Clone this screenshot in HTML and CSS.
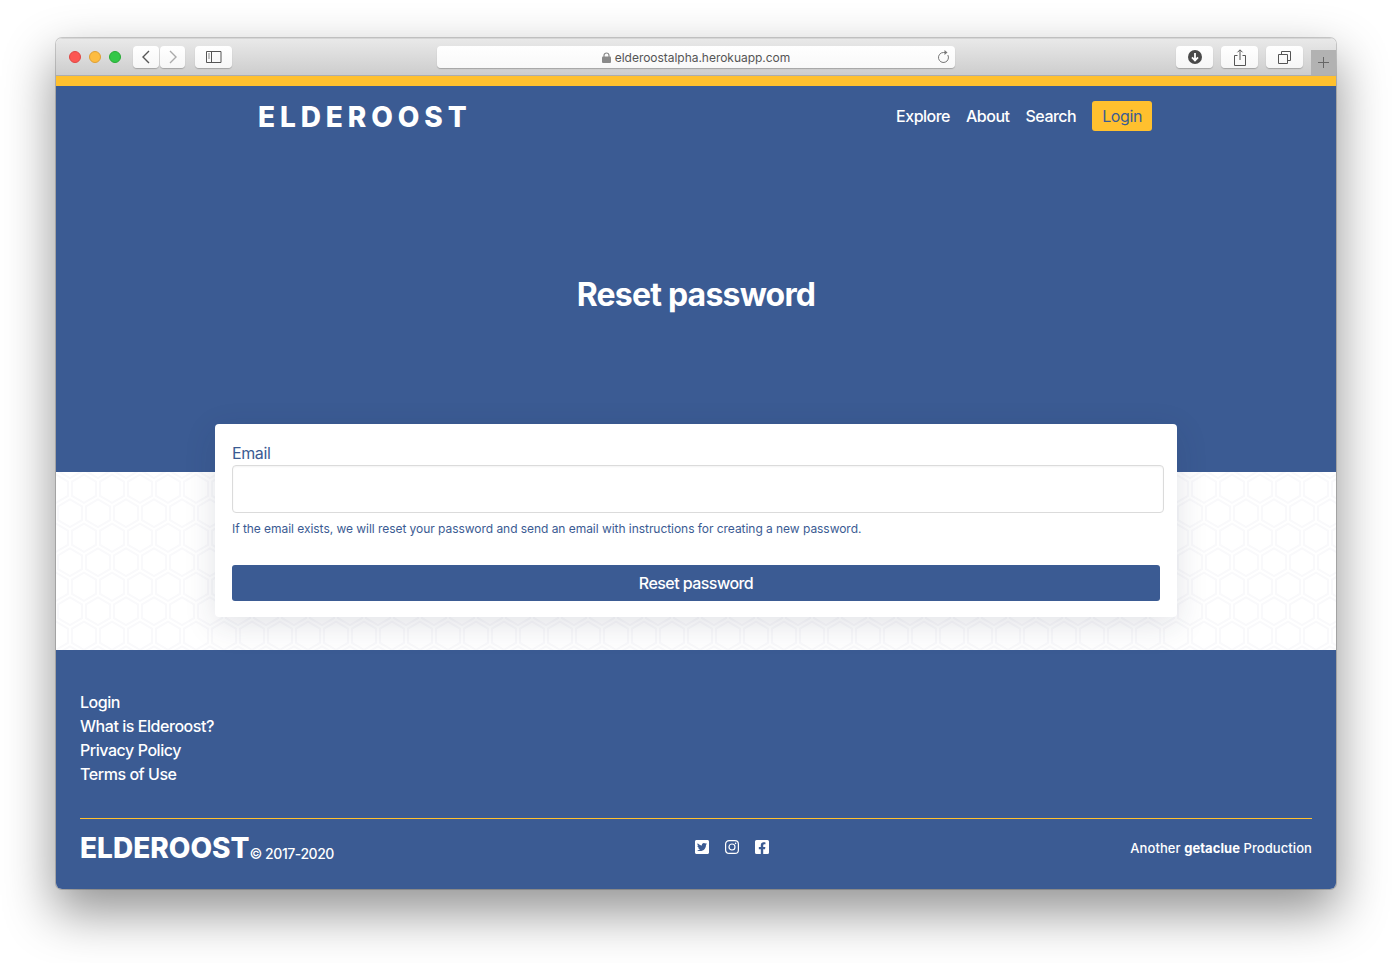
FILE: index.html
```html
<!DOCTYPE html>
<html>
    <head>
        <meta charset="utf-8">
        <title>Elderoost - Reset password</title>
        <link rel="stylesheet" href="styles.css">
    </head>

    <body>
        <div class="window">
            <div class="toolbar">
                <span class="dot dot-red"></span>
                <span class="dot dot-yellow"></span>
                <span class="dot dot-green"></span>
                <div class="tool tool-back">
                    <svg width="10" height="14" viewBox="0 0 10 14"><path d="M8 1L2 7l6 6" fill="none" stroke="#555" stroke-width="1.4"/></svg>
                </div>
                <div class="tool tool-forward">
                    <svg width="10" height="14" viewBox="0 0 10 14"><path d="M2 1l6 6-6 6" fill="none" stroke="#aaa" stroke-width="1.4"/></svg>
                </div>
                <div class="tool tool-sidebar">
                    <svg width="16" height="12" viewBox="0 0 16 12"><path d="M.5.5h14.500v11H.5zM5.500.5v11" fill="none" stroke="#555"/><path d="M2 3h2M2 5h2M2 7h2" stroke="#888"/></svg>
                </div>
                <div class="url">
                    <svg class="lock" width="9" height="11" viewBox="0 0 9 11"><path d="M2 5V3.500a2.500 2.500 0 0 1 5 0V5" fill="none" stroke="#8a8a8a" stroke-width="1.2"/><rect y="4.500" width="9" height="6.500" rx="1" fill="#8a8a8a"/></svg>
                    <span>elderoostalpha.herokuapp.com</span>
                    <svg class="reload" width="13" height="14" viewBox="0 0 13 14"><path d="M10.800 5A5 5 0 1 1 6.500 2.500H8" fill="none" stroke="#777"/><path d="M7.500 0l3 2.500-3 2.500z" fill="#777"/></svg>
                </div>
                <div class="tool tool-download">
                    <svg width="14" height="14" viewBox="0 0 14 14"><circle cx="7" cy="7" r="7" fill="#4a4a4a"/><path d="M7 3v7M4 7.300L7 10.500l3-3.200" fill="none" stroke="#fff" stroke-width="1.800"/></svg>
                </div>
                <div class="tool tool-share">
                    <svg width="12" height="17" viewBox="0 0 12 17"><path d="M3.500 6.500H.5v10h11v-10h-3M6 11V1M3.500 3.300L6 .8l2.500 2.500" fill="none" stroke="#555"/></svg>
                </div>
                <div class="tool tool-tabs">
                    <svg width="13" height="13" viewBox="0 0 13 13"><path d="M.5 3.500h9v9h-9zM3.500 3.500v-3h9v9h-3" fill="none" stroke="#555"/></svg>
                </div>
                <div class="new-tab">
                    <svg width="11" height="11" viewBox="0 0 11 11"><path d="M5.500 0v11M0 5.500h11" stroke="#666"/></svg>
                </div>
            </div>

            <div class="hero">
                <nav class="nav">
                    <a class="logo">ELDEROOST</a>
                    <div class="nav-links">
                        <a>Explore</a>
                        <a>About</a>
                        <a>Search</a>
                        <a class="nav-login">Login</a>
                    </div>
                </nav>
                <h1 class="title">Reset password</h1>
            </div>

            <div class="band">
                <form class="card">
                    <label class="field-label" for="email">Email</label>
                    <input class="field-input" type="text" id="email"/>
                    <p class="field-help">If the email exists, we will reset your password and send an email with instructions for creating a new password.</p>
                    <button class="submit" type="button">Reset password</button>
                </form>
            </div>

            <footer class="footer">
                <ul class="footer-links">
                    <li>Login</li>
                    <li>What is Elderoost?</li>
                    <li>Privacy Policy</li>
                    <li>Terms of Use</li>
                </ul>
                <div class="footer-bottom">
                    <div class="brand"><span class="brand-name">ELDEROOST</span><span class="brand-year">© 2017-2020</span></div>
                    <div class="social">
                        <svg width="14" height="16" viewBox="0 0 448 512"><path fill="#fff" d="M400 32H48C21.500 32 0 53.500 0 80v352c0 26.500 21.500 48 48 48h352c26.500 0 48-21.500 48-48V80c0-26.500-21.500-48-48-48zm-48.900 158.800c.2 2.800.2 5.700.2 8.500 0 86.700-66 186.600-186.600 186.600-37.200 0-71.700-10.800-100.700-29.400 5.300.6 10.400.8 15.800.8 30.700 0 58.900-10.400 81.400-28-28.800-.6-53-19.500-61.300-45.500 10.100 1.500 19.200 1.500 29.600-1.200-30-6.100-52.500-32.500-52.500-64.400v-.8c8.700 4.900 18.900 7.900 29.600 8.300a65.447 65.447 0 0 1-29.200-54.600c0-12.200 3.200-23.400 8.900-33.100 32.300 39.800 80.800 65.800 135.200 68.600-9.300-44.500 24-80.600 64-80.600 18.900 0 35.900 7.900 47.900 20.700 14.800-2.800 29-8.300 41.600-15.800-4.900 15.200-15.100 28-28.800 36.200 13.200-1.400 26-5.100 37.800-10.200-8.900 13.100-20.100 24.700-32.900 34z"/></svg>
                        <svg width="14" height="16" viewBox="0 0 14 16"><rect x=".6" y="1.600" width="12.800" height="12.800" rx="3.500" fill="none" stroke="#fff" stroke-width="1.200"/><circle cx="7" cy="8" r="3" fill="none" stroke="#fff" stroke-width="1.200"/><circle cx="10.600" cy="4.400" r=".8" fill="#fff"/></svg>
                        <svg width="14" height="16" viewBox="0 0 448 512"><path fill="#fff" d="M400 32H48A48 48 0 0 0 0 80v352a48 48 0 0 0 48 48h137.250V327.690h-63V256h63v-54.640c0-62.150 37-96.480 93.670-96.480 27.140 0 55.520 4.840 55.520 4.840v61h-31.270c-30.810 0-40.420 19.120-40.420 38.730V256h68.780l-11 71.690h-57.780V480H400a48 48 0 0 0 48-48V80a48 48 0 0 0-48-48z"/></svg>
                    </div>
                    <div class="credit">Another <b>getaclue</b> Production</div>
                </div>
            </footer>
        </div>
    </body>
</html>
```

FILE: styles.css
```css
html, body {
    height: 963px;
    overflow: hidden;
}

body {
    margin: 0;
    padding: 38px 56px 0;
    box-sizing: border-box;
    background: #fff;
    font-family: Inter, "Liberation Sans", sans-serif;
    color: #3b5b93;
}

.window {
    width: 1280px;
    height: 851px;
    border-radius: 6px;
    overflow: hidden;
}

body::before {
    content: "";
    position: absolute;
    left: 56px;
    top: 38px;
    width: 1280px;
    height: 851px;
    border-radius: 6px;
    box-shadow: 0 0 0 1px rgba(0, 0, 0, 0.18), 0 22px 50px 2px rgba(0, 0, 0, 0.42);
    z-index: -1;
}

/* browser chrome */
.toolbar {
    display: flex;
    align-items: center;
    height: 38px;
    box-sizing: border-box;
    padding: 0 0 0 13px;
    background: linear-gradient(#e9e9e9, #cdcdcd);
    border-top: 1px solid #d6d6d6;
    border-bottom: 1px solid #adadad;
}

.dot {
    width: 12px;
    height: 12px;
    margin-right: 8px;
    border-radius: 50%;
    box-sizing: border-box;
}
.dot-red { background: #fc5753; border: 1px solid #df4744; }
.dot-yellow { background: #fdbc40; border: 1px solid #de9f34; }
.dot-green { background: #33c748; border: 1px solid #27aa35; }

.tool {
    display: flex;
    align-items: center;
    justify-content: center;
    width: 37px;
    height: 22px;
    margin-right: 8px;
    background: linear-gradient(#fff, #f6f6f6);
    border-radius: 4px;
    box-shadow: 0 1px 1px rgba(0, 0, 0, 0.22);
}
.tool-back { width: 26px; margin: 0 1px 0 4px; }
.tool-forward { width: 25px; margin-right: 10px; }
.tool-sidebar { margin-right: 205px; }

.url {
    display: flex;
    align-items: center;
    justify-content: center;
    position: relative;
    width: 518px;
    height: 22px;
    margin-right: 221px;
    font-size: 12px;
    color: #555;
    background: linear-gradient(#fff, #f8f8f8);
    border-radius: 4px;
    box-shadow: 0 1px 1px rgba(0, 0, 0, 0.22);
}
.url span { margin-left: 4px; letter-spacing: -0.03px; }
.reload { position: absolute; right: 5px; top: 4px; }

.new-tab {
    display: flex;
    align-items: center;
    justify-content: center;
    align-self: flex-end;
    width: 25px;
    height: 25px;
    background: #b2b2b2;
}

/* hero */
.hero {
    box-sizing: border-box;
    border-top: 10px solid #ffc02e;
    background: #3b5b93;
    height: 396px;
}

.nav {
    display: flex;
    align-items: center;
    justify-content: space-between;
    padding: 12px 184px 0 202px;
}

.logo {
    margin-top: 2px;
    font-size: 28px;
    font-weight: 800;
    letter-spacing: 4.900px;
    color: #fff;
}

.nav-links {
    display: flex;
    align-items: center;
    gap: 16px;
    font-size: 16px;
    font-weight: 500;
    letter-spacing: -0.5px;
    color: #fff;
}

.nav-login {
    padding: 0 10px;
    line-height: 30px;
    font-weight: 400;
    letter-spacing: -0.4px;
    color: #3b5b93;
    background: #ffc02e;
    border-radius: 3px;
}

.title {
    margin: 141px 0 0;
    font-size: 32px;
    line-height: 40px;
    font-weight: 700;
    letter-spacing: -0.8px;
    text-align: center;
    color: #fff;
}

/* form */
.band {
    height: 178px;
    box-sizing: border-box;
    background-color: #fff;
    background-position: 0 17px;
    background-image: url("data:image/svg+xml,%3Csvg xmlns='http://www.w3.org/2000/svg' width='28' height='49' viewBox='0 0 28 49'%3E%3Cpath fill='%23f9f9fb' d='M13.990 9.250l13 7.500v15l-13 7.500L1 31.750v-15l12.990-7.500zM3 17.900v12.700l10.990 6.340 11-6.350V17.900l-11-6.340L3 17.900zM0 15l12.980-7.500V0h-2v6.350L0 12.690v2.300zm0 18.500L12.980 41v8h-2v-6.850L0 35.810v-2.300zM15 0v7.500L27.990 15H28v-2.310h-.01L17 6.350V0h-2zm0 49v-8l12.990-7.500H28v2.310h-.01L17 42.150V49h-2z'/%3E%3C/svg%3E");
}

.card {
    width: 962px;
    height: 193px;
    box-sizing: border-box;
    margin: 0 0 0 159px;
    padding: 19px 17px 0;
    position: relative;
    top: -48px;
    background: #fff;
    border-radius: 4px;
    box-shadow: 0 8px 32px rgba(30, 40, 70, 0.13);
}

.field-label {
    display: block;
    font-size: 16px;
    line-height: 20px;
    letter-spacing: -0.4px;
}

.field-input {
    display: block;
    width: 932px;
    height: 48px;
    margin-top: 2px;
    box-sizing: border-box;
    border: 1px solid #dbdbdb;
    border-radius: 4px;
    background: #fff;
    box-shadow: inset 0 1px 2px rgba(10, 10, 10, 0.05);
}

.field-help {
    margin: 8px 0 0;
    font-size: 12px;
    line-height: 16px;
    letter-spacing: -0.045px;
}

.submit {
    display: block;
    width: 928px;
    height: 36px;
    margin-top: 28px;
    padding: 0;
    border: 0;
    border-radius: 3px;
    font: 500 16px Inter, "Liberation Sans", sans-serif;
    letter-spacing: -0.55px;
    color: #fff;
    background: #3b5b93;
}

/* footer */
.footer {
    height: 239px;
    box-sizing: border-box;
    padding: 40px 24px 0;
    background: #3b5b93;
    color: #fff;
}

.footer-links {
    margin: 0;
    padding: 0 0 32px;
    list-style: none;
    font-size: 16px;
    font-weight: 500;
    letter-spacing: -0.45px;
    line-height: 24px;
    border-bottom: 1px solid #ffc02e;
}

.footer-bottom {
    display: flex;
    justify-content: space-between;
    align-items: center;
    padding-top: 12px;
}

.brand { width: 254px; white-space: nowrap; }
.brand-name { font-size: 28px; font-weight: 800; letter-spacing: 0; }
.brand-year { font-size: 14px; font-weight: 500; letter-spacing: -0.45px; vertical-align: -1px; }

.social {
    display: flex;
    gap: 16px;
    margin-bottom: 2px;
}

.credit {
    font-size: 13px;
    font-weight: 500;
    letter-spacing: 0.07px;
}
```
